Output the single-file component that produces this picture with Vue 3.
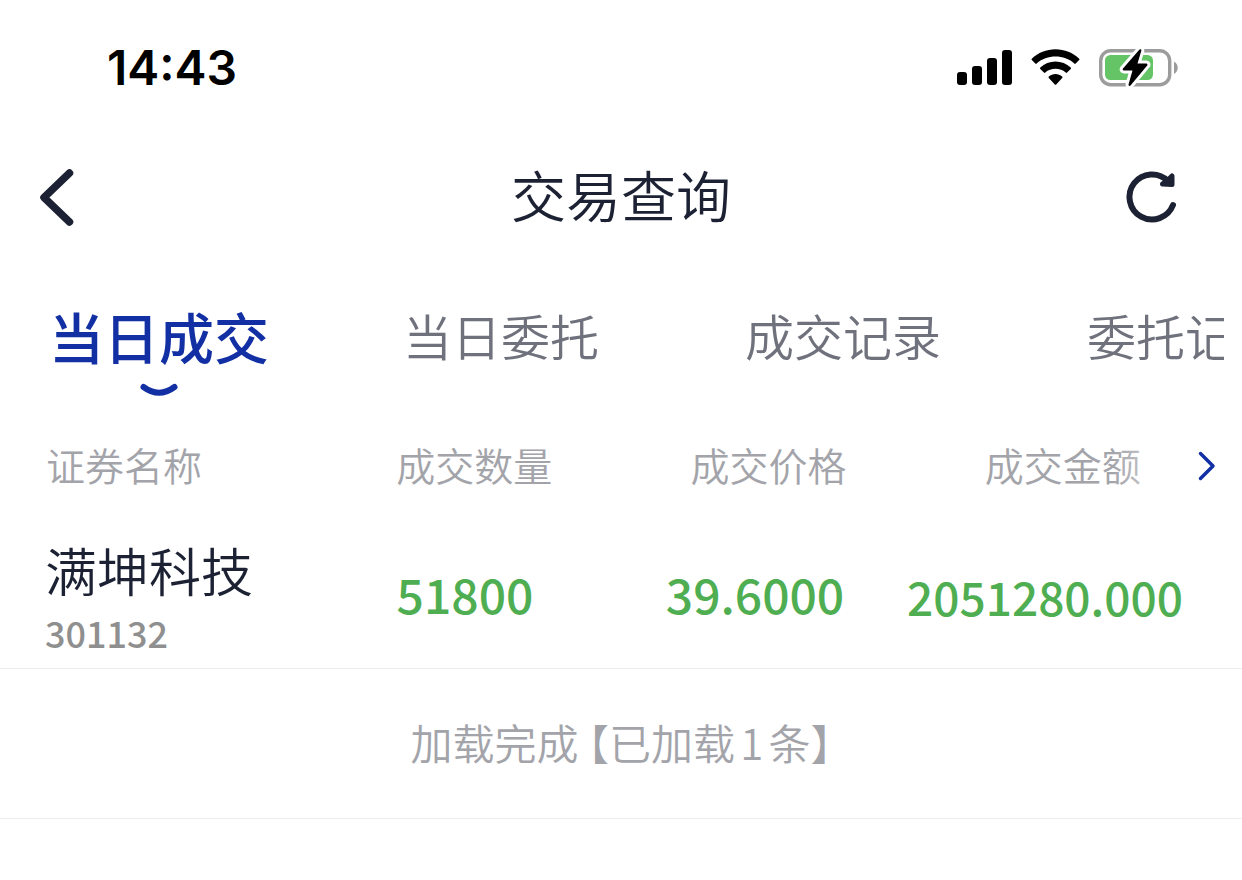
<script setup>
import { ref } from 'vue'

const tabs = ['当日成交', '当日委托', '成交记录', '委托记录']
const active = ref(0)
const columns = ['证券名称', '成交数量', '成交价格', '成交金额']
const deals = [
  { name: '满坤科技', code: '301132', volume: '51800', price: '39.6000', amount: '2051280.000' }
]
</script>

<template>
  <div class="screen">
    <div class="status">
      <time class="clock">14:43</time>
      <div class="indicators">
        <svg width="56" height="38" viewBox="0 0 56 38" aria-hidden="true">
          <rect x="0" y="23" width="10" height="13" rx="3" />
          <rect x="15" y="17" width="10" height="19" rx="3" />
          <rect x="30" y="9" width="10" height="27" rx="3" />
          <rect x="45" y="1" width="10" height="35" rx="3" />
        </svg>
        <svg width="48" height="38" viewBox="0 0 48 38" aria-hidden="true">
          <path d="M23.500 0.300C32.500 0.300 41 3.700 47.200 9.700Q47.800 10.300 47.200 11L43.700 14.600Q43 15.200 42.300 14.600C37 9.700 30.500 7.600 23.500 7.600S10 9.700 4.700 14.600Q4 15.200 3.300 14.600L-0.200 11Q-0.800 10.300 -0.200 9.700C6 3.700 14.500 0.300 23.500 0.300Z" />
          <path d="M23.500 12.600C29.200 12.600 34.600 14.700 38.700 18.500Q39.400 19.200 38.700 20L35.100 23.600Q34.400 24.200 33.700 23.600C30.900 21 27.300 19.800 23.500 19.800S16.100 21 13.300 23.600Q12.600 24.200 11.900 23.600L8.300 20Q7.600 19.200 8.300 18.500C12.400 14.700 17.800 12.600 23.500 12.600Z" />
          <path d="M23.500 25C26 25 28.400 26 30.200 27.600Q30.900 28.300 30.200 29L24.200 35.400Q23.500 36.100 22.800 35.400L16.800 29Q16.100 28.300 16.800 27.600C18.600 26 21 25 23.500 25Z" />
        </svg>
        <svg width="80" height="38" viewBox="0 0 80 38" aria-hidden="true">
          <rect x="1.700" y="1.700" width="69" height="34" rx="10" fill="none" stroke="#9c9c9c" stroke-width="3.400" />
          <path d="M75 12.500C80 15 80 22.500 75 25Z" fill="#9c9c9c" />
          <rect x="6" y="6" width="48" height="25" rx="5.500" fill="#65c466" />
          <path d="M40.500 0.500L23.800 19.800Q23.200 21.200 24.500 21.400H33.500L29.500 35.500Q29.700 37.800 31.500 36.600L48.400 16.200Q48.800 14.600 47.400 14.400H38.500L42.400 1.500Q42.200 -0.500 40.500 0.500Z" stroke="#fff" stroke-width="6" stroke-linejoin="round" paint-order="stroke" />
        </svg>
      </div>
    </div>

    <header class="nav">
      <button class="icon-button" type="button" aria-label="返回">
        <svg width="36" height="60" viewBox="0 0 36 60">
          <path d="M31.500 5L6 29.500L31.500 54" fill="none" stroke="#1c2233" stroke-width="7.500" stroke-linecap="round" stroke-linejoin="round" />
        </svg>
      </button>
      <h1>交易查询</h1>
      <button class="icon-button" type="button" aria-label="刷新">
        <svg width="52" height="54" viewBox="0 0 52 54" fill="none" stroke="#1c2233" stroke-width="6" stroke-linecap="round" stroke-linejoin="round">
          <path d="M48 34A22.500 22.500 0 1 1 43 10.100" />
          <path d="M47 5V13.500L37.500 13L43 9Z" fill="#1c2233" stroke-width="5" />
        </svg>
      </button>
    </header>

    <div class="tabs" role="tablist">
      <button
        v-for="(tab, i) in tabs"
        :key="tab"
        type="button"
        role="tab"
        class="tab"
        :class="{ current: i === active }"
        :aria-selected="i === active"
        @click="active = i"
      >
        {{ tab }}
        <svg v-if="i === active" class="smile" width="38" height="14" viewBox="0 0 38 14" aria-hidden="true">
          <path d="M3.500 4Q19 15.500 34.500 4" fill="none" stroke="#1230a4" stroke-width="6" stroke-linecap="round" />
        </svg>
      </button>
    </div>

    <div class="list">
      <table>
        <thead>
          <tr>
            <th v-for="c in columns" :key="c" scope="col">{{ c }}</th>
          </tr>
        </thead>
        <tbody>
          <tr v-for="d in deals" :key="d.code">
            <td class="stock">
              <span class="name">{{ d.name }}</span>
              <span class="code">{{ d.code }}</span>
            </td>
            <td>{{ d.volume }}</td>
            <td>{{ d.price }}</td>
            <td class="amount">{{ d.amount }}</td>
          </tr>
        </tbody>
      </table>
      <button class="more" type="button" aria-label="更多列">
        <svg width="18" height="30" viewBox="0 0 18 30">
          <path d="M2.500 2.500L15 15L2.500 27.500" fill="none" stroke="#1230a4" stroke-width="3.500" stroke-linecap="round" stroke-linejoin="round" />
        </svg>
      </button>
    </div>

    <p class="loaded">加载完成 【已加载1条】</p>
  </div>
</template>

<style>
body {
  margin: 0;
  background: #fff;
}
</style>

<style scoped>
.screen {
  font-family: "Noto Sans CJK SC", sans-serif;
  font-weight: 350;
  color: #1c2233;
  overflow: hidden;
}
button {
  padding: 0;
  border: 0;
  background: none;
  font-family: inherit;
  font-weight: inherit;
  color: inherit;
  cursor: pointer;
}
svg {
  display: block;
  overflow: visible;
}
.status {
  display: flex;
  align-items: center;
  justify-content: space-between;
  height: 136px;
  padding: 0 63px 0 107px;
  color: #000;
}
.clock {
  font: 600 48px/48px Inter, sans-serif;
}
.indicators {
  display: flex;
  gap: 19px;
}
.nav {
  position: relative;
  display: flex;
  align-items: center;
  justify-content: space-between;
  height: 124px;
  padding: 0 65px 0 38px;
}
h1 {
  position: absolute;
  left: 0;
  right: 0;
  margin: 0;
  padding-bottom: 10px;
  font-size: 55px;
  line-height: 72px;
  font-weight: inherit;
  text-align: center;
  pointer-events: none;
}
.tabs {
  display: flex;
  gap: 60px;
  height: 154px;
  margin: 0 18px;
  overflow: hidden;
}
.tab {
  position: relative;
  flex: 0 0 282px;
  padding-bottom: 4px;
  font-size: 49px;
  line-height: 150px;
  color: #6f717c;
  white-space: nowrap;
}
.tab.current {
  font-size: 55px;
  font-weight: 500;
  color: #1230a4;
}
.smile {
  position: absolute;
  left: calc(50% - 19px);
  bottom: 17px;
}
.list {
  position: relative;
}
table,
thead,
tbody {
  display: block;
}
tr {
  display: grid;
  align-items: center;
}
thead tr {
  position: relative;
  grid-template-columns: 327px repeat(3, 1fr);
  padding-right: 32px;
  height: 104px;
}
thead tr::after {
  content: "";
  position: absolute;
  top: 0;
  bottom: 0;
  right: 90px;
  width: 40px;
  background: linear-gradient(to right, rgba(255, 255, 255, 0), rgba(255, 255, 255, 0.4));
}
th {
  padding: 0 0 4px;
  font-size: 39px;
  line-height: 56px;
  font-weight: inherit;
  color: #a3a4aa;
}
th:first-child {
  padding-left: 46px;
  text-align: left;
}
tbody tr {
  grid-template-columns: 320px repeat(3, 1fr);
  padding-right: 52px;
  height: 150px;
  border-bottom: 1px solid #ececec;
}
td {
  padding: 0;
  font-size: 48px;
  line-height: 64px;
  font-weight: 500;
  color: #4fae52;
  text-align: center;
}
.amount {
  padding-top: 6px;
  font-size: 46px;
}
.stock {
  display: flex;
  flex-direction: column;
  padding: 6px 0 0 45px;
  text-align: left;
}
.name {
  font-size: 52px;
  line-height: 72px;
  font-weight: 350;
  color: #1c2233;
}
.code {
  font-size: 36px;
  line-height: 52px;
  color: #8f8f8f;
}
.more {
  position: absolute;
  top: 37px;
  right: 26px;
}
.loaded {
  margin: 0;
  padding-bottom: 4px;
  font-size: 42px;
  line-height: 145px;
  font-feature-settings: "halt";
  text-autospace: normal;
  text-align: center;
  color: #a3a4aa;
  border-bottom: 1px solid #ececec;
}
</style>
